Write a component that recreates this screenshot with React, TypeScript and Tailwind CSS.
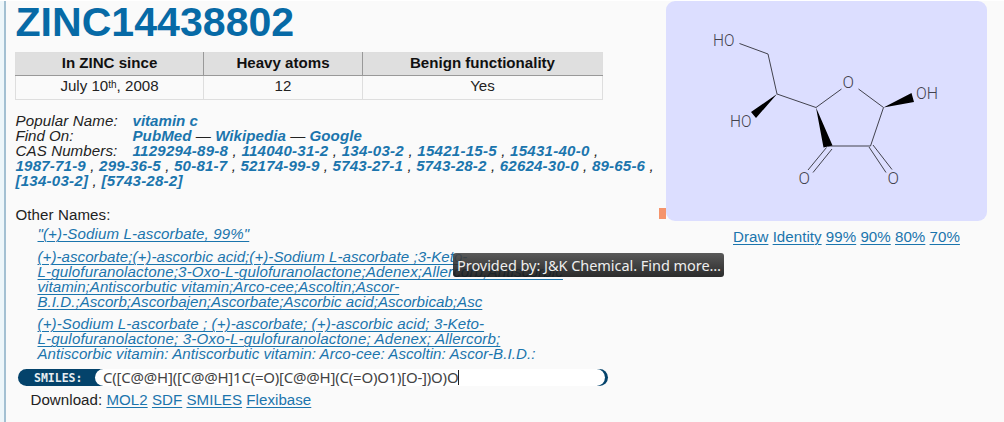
import React from "react";

const link = "text-[#1b75ad] underline decoration-[1.3px] underline-offset-2";

function Line({ children, s = "", u = true }: { children: React.ReactNode; s?: string; u?: boolean }) {
  return (
    <div className="h-[15px] whitespace-nowrap">
      <a className={`${u ? link : "text-[#1b75ad]"} ${s}`}>{children}</a>
    </div>
  );
}

function Cas({ items, s = "" }: { items: string[]; s?: string }) {
  return (
    <span className={s}>
      {items.map((n) => (
        <React.Fragment key={n}>
          <b className="text-[#1b75ad]">{n}</b>
          {" , "}
        </React.Fragment>
      ))}
    </span>
  );
}

function Molecule() {
  return (
    <svg width="321" height="219" viewBox="666 1 321 219" fill="none" stroke="#42424d" strokeWidth="1">
      <path d="M739.5 43.5L768 54L777 94L816 107.5L841.5 89M858.5 89L883.5 107.5L870.5 146H828M826.5 147.5L808 170M832 149L813 172.5M873 145L892 169.5M869 147L886 172.5" />
      <path d="M777 94L751 112L756 118ZM816 107.5L823.5 147.5L832.5 145.5ZM883.5 107.5L911.5 93L914 102Z" fill="#000" stroke="none" />
      <g fill="#42424d" stroke="none" fontFamily="Roboto, sans-serif" fontSize="17" fontWeight="300">
        <text x="713" y="46" textLength="21.5" lengthAdjust="spacingAndGlyphs">HO</text>
        <text x="730" y="127" textLength="21.5" lengthAdjust="spacingAndGlyphs">HO</text>
        <text x="842.5" y="88" textLength="11.5" lengthAdjust="spacingAndGlyphs">O</text>
        <text x="916" y="99" textLength="22" lengthAdjust="spacingAndGlyphs">OH</text>
        <text x="798.5" y="184" textLength="11.5" lengthAdjust="spacingAndGlyphs">O</text>
        <text x="887.5" y="184" textLength="11.5" lengthAdjust="spacingAndGlyphs">O</text>
      </g>
    </svg>
  );
}

export default function App() {
  return (
    <div className="relative flex h-[422px] w-[1004px] overflow-hidden border-t border-white bg-[#fafafa] font-['Liberation_Sans',Arial,sans-serif] text-[15.1px] leading-[15px] text-[#222]">
      <div className="w-[6px] shrink-0 border-r-2 border-[#a3c0d2] bg-[#edf6fa]" />
      <main className="w-[660px] shrink-0 pl-[9px]">
        <h1 className="h-[51px] pl-[0.5px] whitespace-nowrap text-[41.1px] leading-[43px] font-bold text-[#076aa6]">ZINC14438802</h1>
        <table className="w-[587px] table-fixed border-collapse border border-[#dedede] text-center">
          <colgroup>
            <col className="w-[188px]" />
            <col className="w-[159px]" />
            <col className="w-[240px]" />
          </colgroup>
          <thead>
            <tr className="h-[23px] border-b border-[#999] bg-[#dfdfdf] text-[#111]">
              <th className="border-r border-[#999] p-0 pb-[4px]">In ZINC since</th>
              <th className="border-r border-[#999] p-0 pb-[4px]">Heavy atoms</th>
              <th className="p-0 pb-[4px]">Benign functionality</th>
            </tr>
          </thead>
          <tbody>
            <tr className="h-[24px]">
              <td className="border-r border-[#dedede] p-0 pb-[5px]">
                July 10<sup className="top-[-3px] text-[10px] leading-none">th</sup>, 2008
              </td>
              <td className="border-r border-[#dedede] p-0 pb-[5px]">12</td>
              <td className="p-0 pb-[5px]">Yes</td>
            </tr>
          </tbody>
        </table>
        <section className="mt-[13px] pl-[0.5px] whitespace-nowrap italic leading-[15.1px]">
          <div className="flex">
            <span className="w-[117px] tracking-[0.12px]">Popular Name:</span>
            <b className="text-[#1b75ad]">vitamin c</b>
          </div>
          <div className="flex">
            <span className="w-[117px]">Find On:</span>
            <span className="tracking-[0.05px]">
              <b className="text-[#1b75ad]">PubMed</b> — <b className="text-[#1b75ad]">Wikipedia</b> —{" "}
              <b className="text-[#1b75ad]">Google</b>
            </span>
          </div>
          <div className="flex">
            <span className="w-[117px] tracking-[0.1px]">CAS Numbers:</span>
            <Cas items={["1129294-89-8", "114040-31-2", "134-03-2", "15421-15-5", "15431-40-0"]} s="tracking-[0.23px]" />
          </div>
          <div>
            <Cas items={["1987-71-9", "299-36-5", "50-81-7", "52174-99-9", "5743-27-1", "5743-28-2", "62624-30-0", "89-65-6"]} s="tracking-[0.18px]" />
          </div>
          <div className="tracking-[0.22px]">
            <b className="text-[#1b75ad]">[134-03-2]</b> , <b className="text-[#1b75ad]">[5743-28-2]</b>
          </div>
        </section>
        <div className="mt-[19px] h-[19px] pl-[0.5px] tracking-[0.08px]">Other Names:</div>
        <div className="pl-[22.5px] italic">
          <Line s="tracking-[0.12px]">"(+)-Sodium L-ascorbate, 99%"</Line>
          <div className="mt-[8px]">
            <Line s="tracking-[0.04px]">(+)-ascorbate;(+)-ascorbic acid;(+)-Sodium L-ascorbate ;3-Keto-</Line>
            <Line s="tracking-[0.15px]">L-gulofuranolactone;3-Oxo-L-gulofuranolactone;Adenex;Allercorb;Antiscorbic</Line>
            <Line s="tracking-[0.04px]">vitamin;Antiscorbutic vitamin;Arco-cee;Ascoltin;Ascor-</Line>
            <Line s="tracking-[0.03px]">B.I.D.;Ascorb;Ascorbajen;Ascorbate;Ascorbic acid;Ascorbicab;Asc</Line>
          </div>
          <div className="mt-[7px]">
            <Line s="tracking-[0.1px]">(+)-Sodium L-ascorbate ; (+)-ascorbate; (+)-ascorbic acid; 3-Keto-</Line>
            <Line s="tracking-[0.165px]">L-gulofuranolactone; 3-Oxo-L-gulofuranolactone; Adenex; Allercorb;</Line>
            <Line u={false} s="tracking-[0.05px]">Antiscorbic vitamin: Antiscorbutic vitamin: Arco-cee: Ascoltin: Ascor-B.I.D.:</Line>
          </div>
        </div>
        <div className="mt-[8px] ml-[3px] flex h-[17px] w-[590px] rounded-full bg-[#04436b]">
          <span className="w-[77px] pl-[16px] font-['DejaVu_Sans_Mono',monospace] text-[11.5px] leading-[19px] font-bold text-[#e8eef2]">SMILES:</span>
          <div className="mr-[3px] flex flex-1 items-center rounded-full bg-white pl-[8px] whitespace-nowrap font-['Noto_Sans',sans-serif] text-[15px] leading-[17px] tracking-[-0.22px] text-[#444]">
            <span>C([C@@H]([C@@H]1C(=O)[C@@H](C(=O)O1)[O-])O)O</span>
            <span className="h-[15px] w-px bg-[#222]" />
          </div>
        </div>
        <div className="mt-[6px] pl-[15.5px] whitespace-nowrap tracking-[0.04px]">
          Download: <a className={link}>MOL2</a> <a className={link}>SDF</a> <a className={link}>SMILES</a> <a className={link}>Flexibase</a>
        </div>
      </main>
      <aside className="w-[321px] shrink-0">
        <div className="h-[220px] overflow-hidden rounded-[9px] bg-[#dcdeff]">
          <Molecule />
        </div>
        <div className="mt-[8px] pl-[67px] whitespace-nowrap tracking-[0.04px]">
          <a className={link}>Draw</a> <a className={link}>Identity</a> <a className={link}>99%</a> <a className={link}>90%</a> <a className={link}>80%</a> <a className={link}>70%</a>
        </div>
      </aside>
      <div className="absolute top-[207px] left-[659px] h-[11px] w-[7px] bg-[#f5946c]" />
      <div className="absolute top-[252px] left-[453px] flex h-[24px] w-[271px] items-center rounded-[3px] bg-linear-to-b from-[#484848]/90 to-[#151515]/90 pl-[4px] whitespace-nowrap font-['Noto_Sans',sans-serif] text-[14.5px] tracking-[-0.04px] text-[#eee]">
        Provided by: J&amp;K Chemical. Find more…
      </div>
    </div>
  );
}
